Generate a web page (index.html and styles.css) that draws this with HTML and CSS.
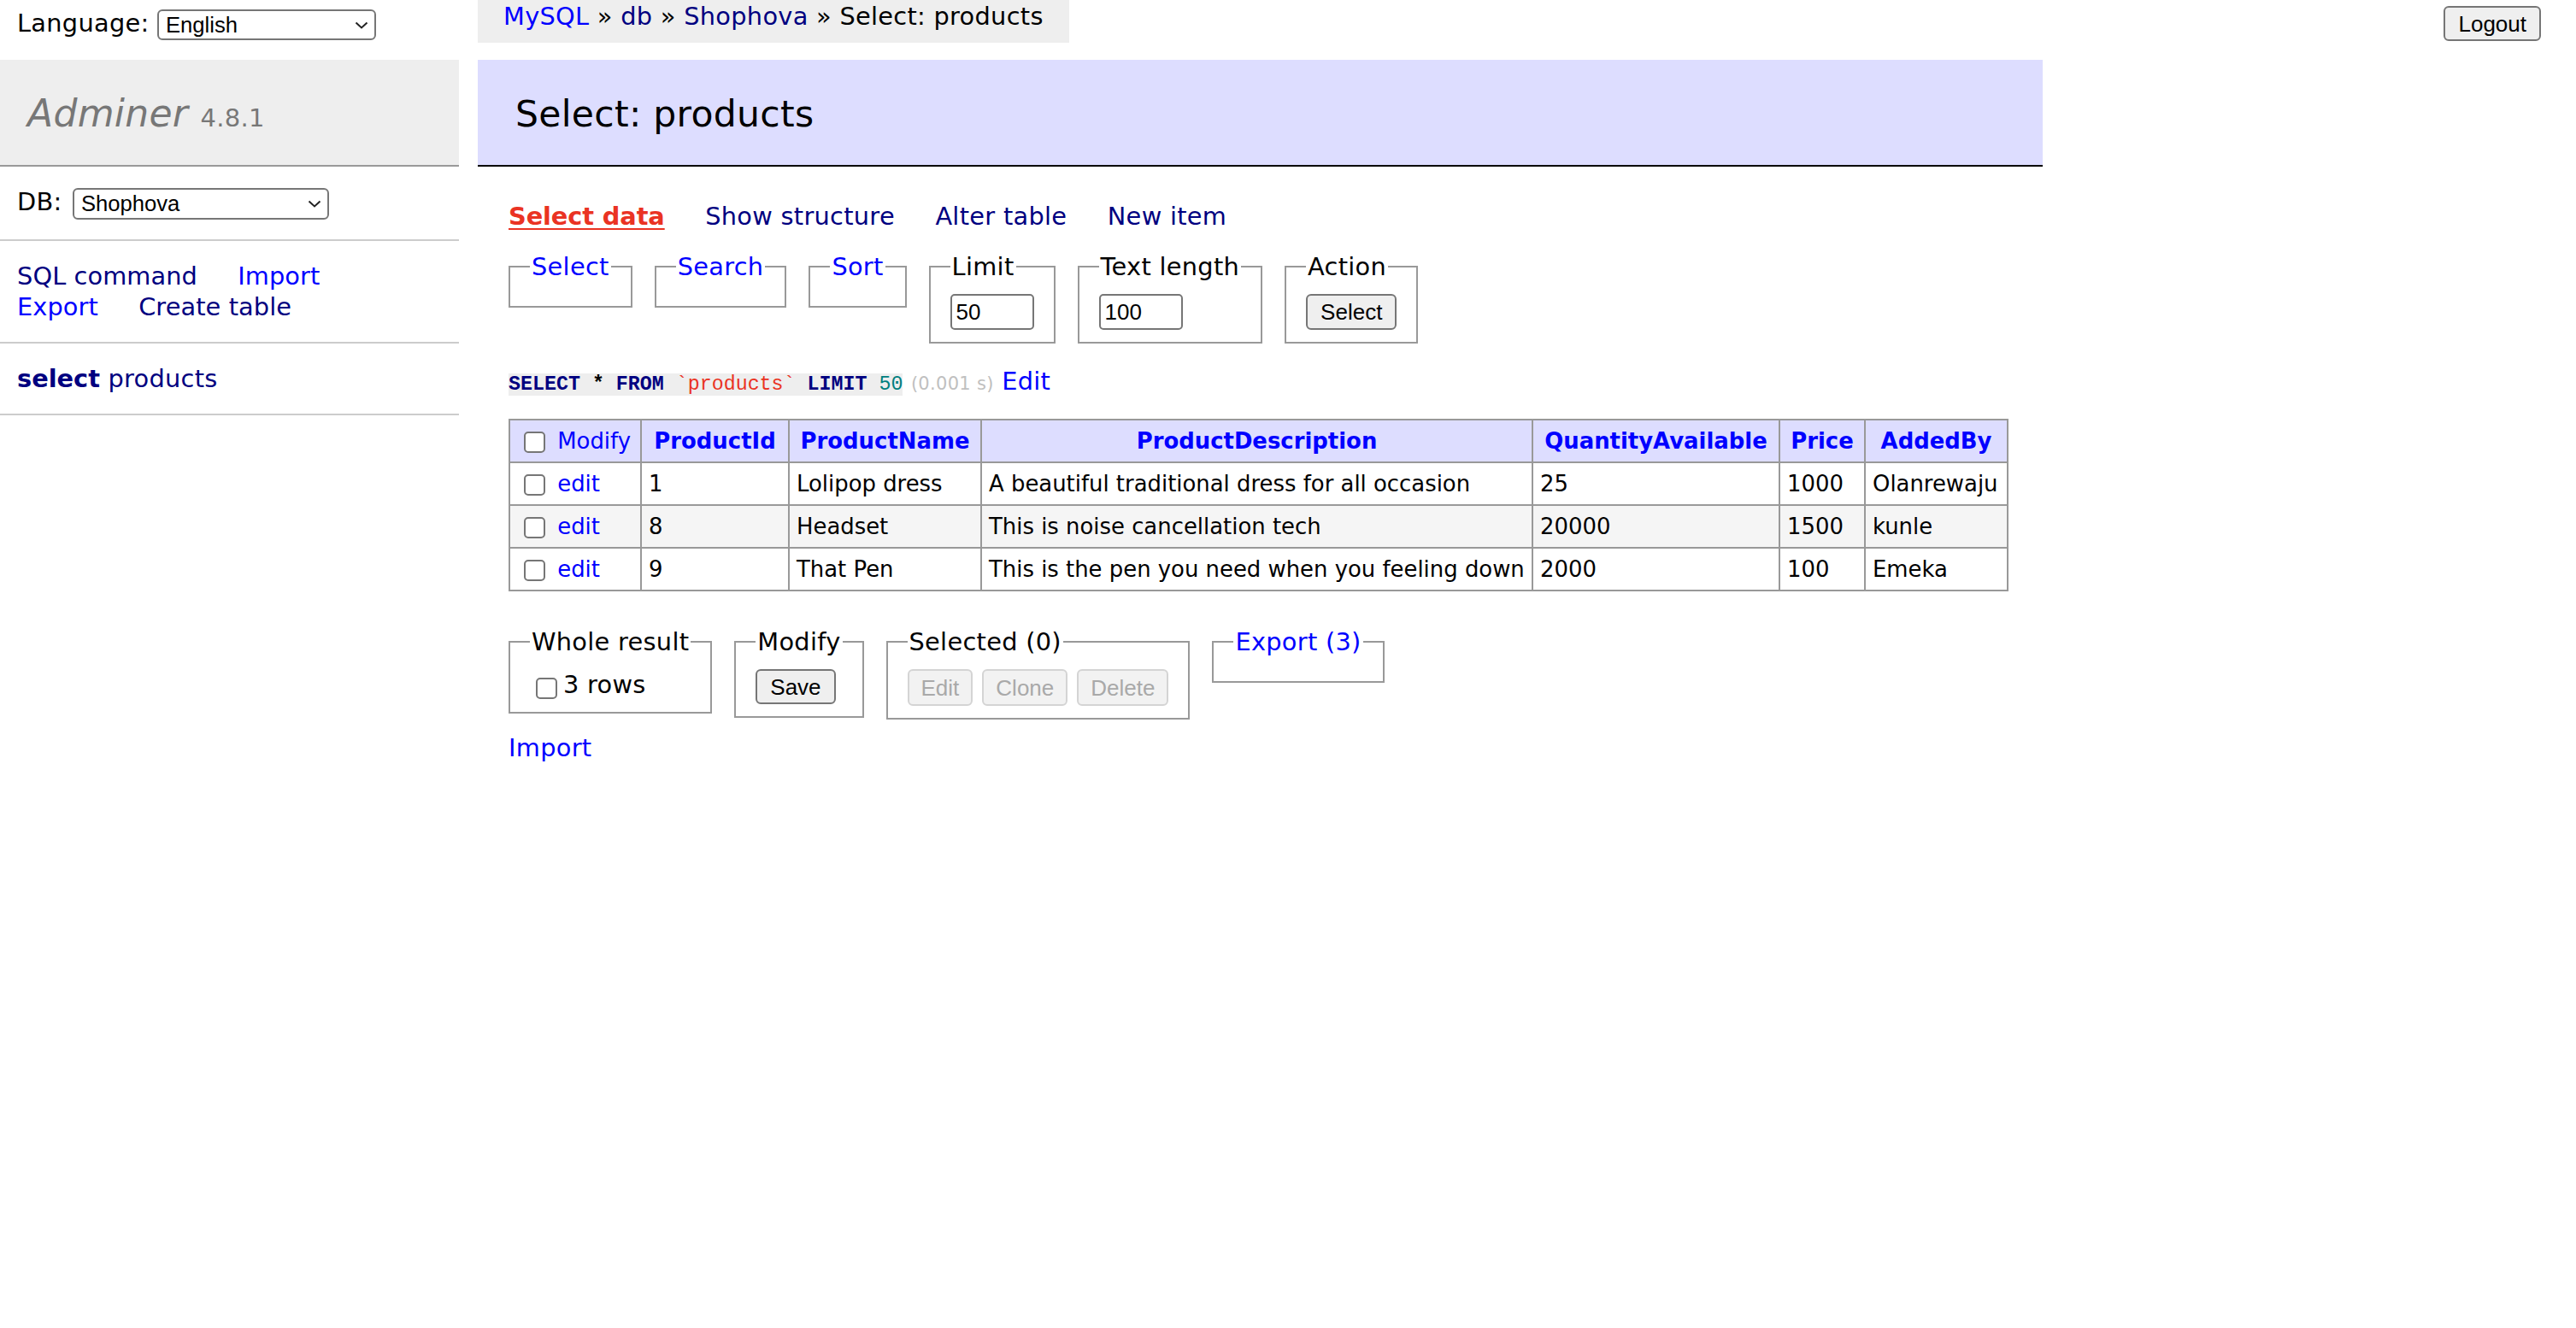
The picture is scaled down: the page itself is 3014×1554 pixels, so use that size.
FILE: index.html
```html
<!DOCTYPE html>
<html lang="en">
<head>
<meta charset="utf-8">
<title>Select: products - Shophova - Adminer</title>
<link rel="stylesheet" href="styles.css">
</head>
<body>
<div class="layout">
  <aside class="menu">
    <form class="lang">Language: <span class="select-wrap lang-select"><select class="select"><option>English</option></select><svg class="chevron" viewBox="0 0 16 9" aria-hidden="true"><polyline points="1.5,1.5 8,7.5 14.5,1.5"/></svg></span></form>
    <h1 class="brand"><a class="brand-name" href="#">Adminer</a> <span class="version">4.8.1</span></h1>
    <p class="menu-block db-row">DB: <span class="select-wrap db-select"><select class="select"><option>Shophova</option></select><svg class="chevron" viewBox="0 0 16 9" aria-hidden="true"><polyline points="1.5,1.5 8,7.5 14.5,1.5"/></svg></span></p>
    <p class="menu-block menu-links"><a class="mlink navy" href="#">SQL command</a> <a class="mlink" href="#">Import</a> <a class="mlink" href="#">Export</a> <a class="mlink navy" href="#">Create table</a></p>
    <ul class="menu-block tables"><li><a class="navy strong" href="#">select</a> <a class="navy" href="#">products</a></li></ul>
  </aside>

  <main class="content">
    <nav class="breadcrumb"><a href="#">MySQL</a> » <a class="navy" href="#">db</a> » <a class="navy" href="#">Shophova</a> » Select: products</nav>
    <h2 class="title">Select: products</h2>
    <div class="body">
      <p class="tabs"><a class="tab active" href="#">Select data</a> <a class="tab" href="#">Show structure</a> <a class="tab" href="#">Alter table</a> <a class="tab" href="#">New item</a></p>

      <form class="filters">
        <fieldset class="box"><legend class="legend"><a href="#">Select</a></legend></fieldset>
        <fieldset class="box"><legend class="legend"><a href="#">Search</a></legend></fieldset>
        <fieldset class="box"><legend class="legend"><a href="#">Sort</a></legend></fieldset>
        <fieldset class="box"><legend class="legend">Limit</legend><input class="field" type="text" value="50"></fieldset>
        <fieldset class="box"><legend class="legend">Text length</legend><input class="field" type="text" value="100"></fieldset>
        <fieldset class="box"><legend class="legend">Action</legend><button class="btn btn-action" type="button">Select</button></fieldset>
      </form>

      <p class="query"><code class="sql"><span class="kw">SELECT</span> <span class="op">*</span> <span class="kw">FROM</span> <span class="apo">`products`</span> <span class="kw">LIMIT</span> <span class="num">50</span></code> <span class="time">(0.001 s)</span> <a href="#">Edit</a></p>

      <table class="grid">
        <colgroup><col class="c1"><col class="c2"><col class="c3"><col class="c4"><col class="c5"><col class="c6"><col class="c7"></colgroup>
        <thead>
          <tr><td class="head-check"><input class="cb" type="checkbox"> <a href="#">Modify</a></td><th><a href="#">ProductId</a></th><th><a href="#">ProductName</a></th><th><a href="#">ProductDescription</a></th><th><a href="#">QuantityAvailable</a></th><th><a href="#">Price</a></th><th><a href="#">AddedBy</a></th></tr>
        </thead>
        <tbody>
          <tr><td><input class="cb" type="checkbox"> <a href="#">edit</a></td><td>1</td><td>Lolipop dress</td><td>A beautiful traditional dress for all occasion</td><td>25</td><td>1000</td><td>Olanrewaju</td></tr>
          <tr class="odd"><td><input class="cb" type="checkbox"> <a href="#">edit</a></td><td>8</td><td>Headset</td><td>This is noise cancellation tech</td><td>20000</td><td>1500</td><td>kunle</td></tr>
          <tr><td><input class="cb" type="checkbox"> <a href="#">edit</a></td><td>9</td><td>That Pen</td><td>This is the pen you need when you feeling down</td><td>2000</td><td>100</td><td>Emeka</td></tr>
        </tbody>
      </table>

      <form class="actions">
        <fieldset class="box"><legend class="legend">Whole result</legend><label class="rows"><input class="cb cb-rows" type="checkbox">3 rows</label></fieldset>
        <fieldset class="box"><legend class="legend">Modify</legend><button class="btn btn-save" type="button">Save</button></fieldset>
        <fieldset class="box"><legend class="legend">Selected (0)</legend><div class="btn-row"><button class="btn" type="button" disabled>Edit</button><button class="btn" type="button" disabled>Clone</button><button class="btn" type="button" disabled>Delete</button></div></fieldset>
        <fieldset class="box"><legend class="legend"><a href="#">Export (3)</a></legend></fieldset>
      </form>

      <p class="import"><a href="#">Import</a></p>
    </div>
  </main>
</div>
<form class="logout"><button class="btn btn-logout" type="button">Logout</button></form>
</body>
</html>
```

FILE: styles.css
```css
html, body {
  margin: 0;
  background: #fff;
}

body {
  font-family: "DejaVu Sans", Verdana, sans-serif;
  font-size: 28.8px;
  line-height: 36px;
  letter-spacing: 0.3px;
  color: #000;
}

a {
  color: #0000ff;
  text-decoration: none;
}

a.navy {
  color: #000080;
}

.strong {
  font-weight: bold;
  letter-spacing: 0;
}

.layout {
  display: grid;
  grid-template-columns: 559px max-content;
  align-items: start;
}

/* ---------- sidebar ---------- */
.menu {
  width: 537px;
}

.lang {
  margin: 0;
  height: 70px;
  padding: 9px 20px 0;
  box-sizing: border-box;
  white-space: nowrap;
}

.select-wrap {
  position: relative;
  display: inline-block;
  vertical-align: middle;
}

.select {
  -webkit-appearance: none;
  appearance: none;
  display: block;
  margin: 0;
  height: 36px;
  border: 2px solid #767676;
  border-radius: 6px;
  background: #fff;
  color: #000;
  font-family: "Liberation Sans", Arial, sans-serif;
  font-size: 25.6px;
  letter-spacing: 0;
  padding: 0 30px 0 8px;
}

.lang-select .select {
  width: 256px;
}

.db-select {
  margin-left: 3px;
}

.db-select .select {
  width: 300px;
  height: 37px;
}

.chevron {
  position: absolute;
  right: 9px;
  top: 50%;
  width: 16px;
  height: 9px;
  margin-top: -4px;
  fill: none;
  stroke: #222;
  stroke-width: 2;
}

.brand {
  margin: 0;
  padding: 35px 20px 33px 32px;
  background: #eee;
  border-bottom: 2px solid #999;
  font-size: 44px;
  line-height: 55px;
  font-weight: normal;
  color: #777;
  white-space: nowrap;
}

.brand-name {
  color: #777;
  font-style: italic;
}

.version {
  font-size: 29px;
  line-height: 30px;
  color: #777;
}

.menu-block {
  margin: 0;
  padding: 23px 20px;
  border-bottom: 2px solid #ccc;
}

.db-row {
  white-space: nowrap;
}

.menu-links {
  letter-spacing: 0.1px;
}

.mlink {
  white-space: nowrap;
  margin-right: 38px;
}

.tables {
  list-style: none;
}

/* ---------- content ---------- */
.breadcrumb {
  width: fit-content;
  height: 50px;
  line-height: 38px;
  padding: 0 30px;
  background: #eee;
  white-space: nowrap;
}

.title {
  margin: 20px 0 0;
  padding: 37px 44px 33px;
  font-size: 42.5px;
  line-height: 53px;
  font-weight: normal;
  color: #000;
  background: #ddf;
  border-bottom: 2px solid #000;
}

.body {
  padding: 0 0 40px 36px;
}

.tabs {
  margin: 40px 0 0;
}

.tab {
  color: #000080;
  margin-right: 38px;
  white-space: nowrap;
}

.tab.active {
  color: #ea3323;
  font-weight: bold;
  letter-spacing: -0.1px;
  text-decoration: underline;
  text-decoration-thickness: 2px;
  text-underline-offset: 4px;
}

.filters,
.actions {
  display: flex;
  align-items: flex-start;
  gap: 26px;
  margin: 23px 0 0;
}

.actions {
  margin-top: 41px;
}

.box {
  margin: 0;
  padding: 14px 23px;
  border: 2px solid #999;
  min-width: 0;
}

.legend {
  padding: 0 2px;
  line-height: 36px;
  white-space: nowrap;
}

.field {
  display: block;
  margin: 0;
  width: 98px;
  height: 42px;
  box-sizing: border-box;
  border: 2px solid #767676;
  border-radius: 5px;
  padding: 0 5px;
  font-family: "Liberation Sans", Arial, sans-serif;
  font-size: 26px;
  letter-spacing: 0;
  color: #000;
  background: #fff;
}

.btn {
  display: block;
  margin: 0;
  height: 42px;
  padding: 0 13px;
  box-sizing: border-box;
  border: 2px solid #767676;
  border-radius: 6px;
  background: #efefef;
  color: #000;
  font-family: "Liberation Sans", Arial, sans-serif;
  font-size: 26px;
  letter-spacing: 0;
  line-height: 1;
}

.btn:disabled {
  color: #a9a9a9;
  border-color: #d4d4d4;
  background: #f2f2f2;
}

.btn-action {
  padding: 0 15px;
}

.btn-save {
  height: 41px;
  padding: 0 15px;
}

.btn-row {
  display: flex;
  gap: 11px;
}

.btn-row .btn {
  height: 43px;
  padding: 0 14px;
}

.query {
  margin: 26px 0 0;
  white-space: nowrap;
}

.sql {
  font-family: "Liberation Mono", "Courier New", monospace;
  font-size: 23.3px;
  line-height: 1;
  letter-spacing: 0;
  background: #eee;
}

.sql .kw {
  color: #000080;
  font-weight: bold;
}

.sql .op {
  font-weight: bold;
}

.sql .apo {
  color: #ea3323;
}

.sql .num {
  color: #007f7f;
}

.time {
  color: #c0c0c0;
  font-size: 21px;
  line-height: 1;
}

/* ---------- result table ---------- */
.grid {
  margin: 26px 40px 0 0;
  border-collapse: collapse;
  table-layout: fixed;
  width: 1753px;
  font-size: 25.9px;
  line-height: 32px;
  letter-spacing: 0;
}

.c1 { width: 154px; }
.c2 { width: 173px; }
.c3 { width: 225px; }
.c4 { width: 645px; }
.c5 { width: 289px; }
.c6 { width: 100px; }
.c7 { width: 167px; }

.grid td,
.grid th {
  border: 2px solid #999;
  padding: 8px;
  white-space: nowrap;
  overflow: hidden;
}

.grid th {
  background: #ddf;
  text-align: center;
  font-weight: bold;
}

.grid .head-check {
  background: #ddf;
}

.grid tr.odd td {
  background: #f5f5f5;
}

.cb {
  -webkit-appearance: none;
  appearance: none;
  width: 25px;
  height: 25px;
  margin: 0 6px 0 8px;
  border: 2px solid #767676;
  border-radius: 5px;
  background: #fff;
  vertical-align: middle;
}

.rows {
  white-space: nowrap;
}

.cb-rows {
  margin: 0 7px 0 7px;
  position: relative;
  top: 2px;
}

.import {
  margin: 15px 0 0;
}

/* ---------- logout ---------- */
.logout {
  position: absolute;
  top: 7px;
  right: 41px;
  margin: 0;
}

.btn-logout {
  height: 41px;
  padding: 0 15px;
}
```
